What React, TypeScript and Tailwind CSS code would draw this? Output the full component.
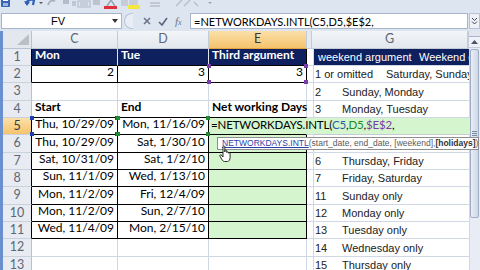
import React from 'react';

type CellProps = {
  w: string;
  bg?: string;
  rb?: string;
  bb?: string;
  align?: string;
  className?: string;
  children?: React.ReactNode;
};

function Cell({ w, bg = 'bg-white', rb = 'border-r-[#d0d7e5]', bb = 'border-b-[#d0d7e5]', align = 'justify-end', className = '', children }: CellProps) {
  return (
    <div className={`${w} shrink-0 border-r border-b ${rb} ${bb} ${bg} flex items-end ${align} px-[3px] pb-[1px] whitespace-nowrap relative ${className}`}>
      {children}
    </div>
  );
}

function Handles({ color }: { color: string }) {
  return (
    <>
      <span className={`absolute -left-[2px] -top-[2px] w-[4px] h-[4px] ${color} z-10`} />
      <span className={`absolute -right-[2px] -top-[2px] w-[4px] h-[4px] ${color} z-10`} />
      <span className={`absolute -left-[2px] -bottom-[2px] w-[4px] h-[4px] ${color} z-10`} />
      <span className={`absolute -right-[2px] -bottom-[2px] w-[4px] h-[4px] ${color} z-10`} />
    </>
  );
}

function RowHead({ n, sel, black }: { n: number; sel?: boolean; black?: boolean }) {
  return (
    <div
      className={`w-[29px] shrink-0 border-r border-b border-b-[#c9d1dd] ${black ? 'border-r-black' : 'border-r-[#b7c1d0]'} ${sel ? 'bg-linear-to-b from-[#fbe0a8] to-[#f5c36c] text-[#3a3a3a]' : 'bg-[#e8ecf2] text-[#5c6675]'} flex items-center justify-center text-[12.5px] leading-none`}
    >
      {n}
    </div>
  );
}

function GText({ num, text, numW = 'w-[27px]' }: { num: string; text: string; numW?: string }) {
  return (
    <div className="flex w-full font-['Liberation_Sans',Arial,sans-serif] text-[11px] leading-[13px] text-[#222]">
      <span className={`${numW} shrink-0`}>{num}</span>
      <span>{text}</span>
    </div>
  );
}

const C = 'w-[86px]';
const D = 'w-[91px]';
const E = 'w-[98px]';
const F = 'w-[5px]';
const G = 'w-[156px]';

const dataRows: { n: number; h: string; c: string; d: string; gn: string; gt: string }[] = [
  { n: 7, h: 'h-[17px]', c: 'Sat, 10/31/09', d: 'Sat, 1/2/10', gn: '6', gt: 'Thursday, Friday' },
  { n: 8, h: 'h-[17px]', c: 'Sun, 11/1/09', d: 'Wed, 1/13/10', gn: '7', gt: 'Friday, Saturday' },
  { n: 9, h: 'h-[18px]', c: 'Mon, 11/2/09', d: 'Fri, 12/4/09', gn: '11', gt: 'Sunday only' },
  { n: 10, h: 'h-[17px]', c: 'Mon, 11/2/09', d: 'Sun, 2/7/10', gn: '12', gt: 'Monday only' },
  { n: 11, h: 'h-[17px]', c: 'Wed, 11/4/09', d: 'Mon, 2/15/10', gn: '13', gt: 'Tuesday only' },
];

export default function App() {
  return (
    <div className="relative w-[480px] h-[270px] overflow-hidden bg-[#dde5f0] flex flex-col font-['Lato','Carlito',sans-serif] text-[12px] text-black select-none">
      {/* Quick access toolbar (cut off) */}
      <div className="h-[11px] shrink-0 relative">
        <svg width="480" height="11" className="block">
          <rect x="1" y="-3" width="9" height="10" rx="1" fill="#3a64b4" />
          <rect x="3" y="-3" width="5" height="4" fill="#ffffff" />
          <rect x="3" y="3" width="5" height="3" fill="#9fb7e0" />
          <path d="M26 4 Q28 -2 34 0 L33 5" stroke="#2d5fb8" strokeWidth="2.2" fill="none" />
          <path d="M24 1 L27 6 L30 2 Z" fill="#2d5fb8" />
          <path d="M39 2 L43 2 L41 4 Z" fill="#555" />
          <path d="M48 5 Q50 -1 55 1" stroke="#a9b2c0" strokeWidth="2" fill="none" />
          <rect x="63" y="0" width="6" height="4" fill="#b4bccb" />
          <rect x="72" y="1" width="4" height="5" fill="#c0c6d2" />
          <rect x="78" y="1" width="12" height="6" fill="none" stroke="#b0b8c6" />
          <path d="M80 3 H88 M80 5 H88" stroke="#b0b8c6" />
          <rect x="93" y="0" width="7" height="5" fill="#bcc3cf" />
          <path d="M107 6 L111 0 L115 6" stroke="#9aa3b2" strokeWidth="1.5" fill="none" />
          <rect x="104" y="6" width="13" height="3" fill="#e0303a" />
          <rect x="121" y="0" width="7" height="6" fill="#c7cdd8" />
          <rect x="129" y="0" width="9" height="5" fill="#c9cfda" />
          <rect x="128" y="5" width="12" height="4" fill="#f5e642" />
          <path d="M150 3 H160 M150 6 H160" stroke="#b9c0cc" strokeWidth="1.5" />
          <path d="M176 6 L182 0 M184 6 L190 0" stroke="#b9c0cc" strokeWidth="1.5" />
          <path d="M194 2 L198 6" stroke="#b9c0cc" strokeWidth="1.5" />
          <path d="M208 2 L212 2 L210 4 Z" fill="#9aa3b2" />
        </svg>
      </div>

      {/* Formula bar */}
      <div className="h-[20px] shrink-0 flex items-center pl-[1px]">
        <div className="w-[121px] h-[16px] bg-white border border-[#a6b5cb] flex items-center pl-[49px] pr-[3px] font-['Liberation_Sans',Arial,sans-serif] text-[11px]">
          <span className="flex-1">FV</span>
          <svg width="6" height="4"><path d="M0 0 L6 0 L3 4 Z" fill="#333" /></svg>
        </div>
        <div className="w-[9px] h-[16px] ml-[2px] rounded-l-full border border-r-0 border-[#b8c4d6] bg-[#e9eef6]" />
        <div className="flex items-center gap-[7px] ml-[10px] w-[47px]">
          <svg width="8" height="8"><path d="M1 1 L7 7 M7 1 L1 7" stroke="#6b7688" strokeWidth="1.6" /></svg>
          <svg width="10" height="9"><path d="M1 5 L4 8 L9 1" stroke="#586579" strokeWidth="1.6" fill="none" /></svg>
          <span className="font-['Liberation_Serif',serif] italic text-[11px] text-[#6b7688] leading-none">f<span className="text-[8px]">x</span></span>
        </div>
        <div className="w-[278px] h-[16px] bg-white border border-[#a6b5cb] flex items-center pl-[3px] text-[11px] leading-none">
          =NETWORKDAYS.INTL(C5,D5,$E$2,
        </div>
        <div className="w-[11px] h-[16px] ml-[1px] bg-[#eef2f8] border border-[#b6c2d4] flex items-center justify-center">
          <svg width="7" height="8"><path d="M1 1 L3.5 3.5 L6 1 M1 4.5 L3.5 7 L6 4.5" stroke="#444" strokeWidth="1" fill="none" /></svg>
        </div>
      </div>

      {/* Sheet */}
      <div className="flex flex-1 border-l-[3px] border-l-[#6a8fcf]">
        <div className="flex flex-col w-[465px] bg-white">
          {/* column headers */}
          <div className="flex h-[18px] shrink-0 text-[12.5px] leading-none">
            <div className="w-[29px] shrink-0 bg-[#e3e8ef] border-r border-b border-[#b7c1d0] relative">
              <svg width="28" height="17" className="absolute left-0 top-0">
                <path d="M14 14 L26 14 L26 3 Z" fill="#b9c0ca" />
              </svg>
            </div>
            <div className={`${C} shrink-0 bg-linear-to-b from-[#f3f5f8] to-[#e2e7ee] border-r border-b border-[#c3cbd7] flex items-center justify-center text-[#5c6675]`}>C</div>
            <div className={`${D} shrink-0 bg-linear-to-b from-[#f3f5f8] to-[#e2e7ee] border-r border-b border-[#c3cbd7] flex items-center justify-center text-[#5c6675]`}>D</div>
            <div className={`${E} shrink-0 bg-linear-to-b from-[#fbe0a8] to-[#f5c36c] border-r border-b border-r-[#c3cbd7] border-b-[#e3a33e] flex items-center justify-center text-[#3a3a3a]`}>E</div>
            <div className={`${F} shrink-0 bg-[#e6eaf0] border-r border-b border-[#c3cbd7]`} />
            <div className={`${G} shrink-0 bg-linear-to-b from-[#f3f5f8] to-[#e2e7ee] border-r border-b border-[#c3cbd7] flex items-center justify-center text-[#5c6675]`}>G</div>
          </div>

          {/* Row 1 */}
          <div className="flex h-[17px] shrink-0">
            <RowHead n={1} black />
            <Cell w={C} bg="bg-[#0f205e]" rb="border-r-[#dfe3ec]" bb="border-b-black" align="justify-start" className="font-bold text-white">Mon</Cell>
            <Cell w={D} bg="bg-[#0f205e]" rb="border-r-[#dfe3ec]" bb="border-b-black" align="justify-start" className="font-bold text-white">Tue</Cell>
            <Cell w={E} bg="bg-[#0f205e]" rb="border-r-black" bb="border-b-black" align="justify-start" className="font-bold text-white">Third argument</Cell>
            <Cell w={F} />
            <Cell w={G} bg="bg-[#0f205e]" align="justify-start" className="overflow-hidden px-[0px]">
              <div className="flex w-full font-['Liberation_Sans',Arial,sans-serif] text-[11px] leading-[13px] text-white pl-[1px]">
                <span className="w-[101px] shrink-0">weekend argument</span>
                <span>Weekend days</span>
              </div>
            </Cell>
          </div>

          {/* Row 2 */}
          <div className="flex h-[17px] shrink-0">
            <RowHead n={2} black />
            <Cell w={C} rb="border-r-black" bb="border-b-black">2</Cell>
            <Cell w={D} rb="border-r-black" bb="border-b-black">3</Cell>
            <Cell w={E} rb="border-r-black" bb="border-b-black">
              3
              <Handles color="bg-[#7a3ea8]" />
            </Cell>
            <Cell w={F} />
            <Cell w={G} align="justify-start" className="overflow-hidden px-[0px] pl-[1px]">
              <GText num="1 or omitted" text="Saturday, Sunday" numW="w-[71px]" />
            </Cell>
          </div>

          {/* Row 3 */}
          <div className="flex h-[18px] shrink-0">
            <RowHead n={3} />
            <Cell w={C} />
            <Cell w={D} />
            <Cell w={E} />
            <Cell w={F} />
            <Cell w={G} align="justify-start" className="overflow-hidden px-[0px] pl-[1px]">
              <GText num="2" text="Sunday, Monday" />
            </Cell>
          </div>

          {/* Row 4 */}
          <div className="flex h-[17px] shrink-0">
            <RowHead n={4} />
            <Cell w={C} bb="border-b-black" align="justify-start" className="font-bold">Start</Cell>
            <Cell w={D} bb="border-b-black" align="justify-start" className="font-bold">End</Cell>
            <Cell w={E} bb="border-b-black" align="justify-start" className="font-bold">Net working Days</Cell>
            <Cell w={F} />
            <Cell w={G} align="justify-start" className="overflow-hidden px-[0px] pl-[1px]">
              <GText num="3" text="Monday, Tuesday" />
            </Cell>
          </div>

          {/* Row 5 */}
          <div className="flex h-[17px] shrink-0">
            <RowHead n={5} sel black />
            <Cell w={C} rb="border-r-black" bb="border-b-black">
              Thu, 10/29/09
              <Handles color="bg-[#1d3fb0]" />
            </Cell>
            <Cell w={D} rb="border-r-black" bb="border-b-black">
              Mon, 11/16/09
              <Handles color="bg-[#1f8a2e]" />
            </Cell>
            <Cell w={E} bg="bg-[#d4f5cd]" rb="border-r-[#d4f5cd]" bb="border-b-black" align="justify-start">
              <span className="absolute left-[2px] bottom-[1px] z-20 whitespace-nowrap text-[11.5px] tracking-[-0.15px]">
                =NETWORKDAYS.INTL(<span className="text-[#1f5fa8]">C5</span>,<span className="text-[#1c8a2a]">D5</span>,<span className="text-[#7a3ea8]">$E$2</span>,
              </span>
            </Cell>
            <Cell w={F} bg="bg-[#d4f5cd]" rb="border-r-[#d4f5cd]" />
            <Cell w={G} bg="bg-[#d4f5cd]" rb="border-r-[#d4f5cd]" bb="border-b-[#c5cbd5]" />
          </div>

          {/* Row 6 */}
          <div className="flex h-[18px] shrink-0">
            <RowHead n={6} black />
            <Cell w={C} rb="border-r-black" bb="border-b-black">Thu, 10/29/09</Cell>
            <Cell w={D} rb="border-r-black" bb="border-b-black">Sat, 1/30/10</Cell>
            <Cell w={E} bg="bg-[#d4f5cd]" rb="border-r-black" bb="border-b-black" />
            <Cell w={F} />
            <Cell w={G} />
          </div>

          {dataRows.map((r) => (
            <div key={r.n} className={`flex ${r.h} shrink-0`}>
              <RowHead n={r.n} black />
              <Cell w={C} rb="border-r-black" bb="border-b-black">{r.c}</Cell>
              <Cell w={D} rb="border-r-black" bb="border-b-black">{r.d}</Cell>
              <Cell w={E} bg="bg-[#d4f5cd]" rb="border-r-black" bb="border-b-black" />
              <Cell w={F} />
              <Cell w={G} align="justify-start" className="overflow-hidden px-[0px] pl-[1px]">
                <GText num={r.gn} text={r.gt} />
              </Cell>
            </div>
          ))}

          {/* Row 12 */}
          <div className="flex h-[18px] shrink-0">
            <RowHead n={12} />
            <Cell w={C} />
            <Cell w={D} />
            <Cell w={E} />
            <Cell w={F} />
            <Cell w={G} align="justify-start" className="overflow-hidden px-[0px] pl-[1px]">
              <GText num="14" text="Wednesday only" />
            </Cell>
          </div>

          {/* Row 13 */}
          <div className="flex h-[17px] shrink-0">
            <RowHead n={13} />
            <Cell w={C} />
            <Cell w={D} />
            <Cell w={E} />
            <Cell w={F} />
            <Cell w={G} align="justify-start" className="overflow-hidden px-[0px] pl-[1px]">
              <GText num="15" text="Thursday only" />
            </Cell>
          </div>
        </div>

        {/* Vertical scrollbar */}
        <div className="w-[12px] shrink-0 bg-[#e8edf5] border-l border-[#c4cedd] flex flex-col">
          <div className="h-[6px] border-b border-[#a9b6c9] bg-[#dfe6f0]" />
          <div className="h-[11px] flex items-center justify-center bg-[#eef2f8] border-b border-[#c4cedd]">
            <svg width="7" height="4"><path d="M0 4 L3.5 0 L7 4 Z" fill="#4a5566" /></svg>
          </div>
          <div className="h-[169px] mx-[1px] mt-[1px] rounded-[2px] border border-[#9eadc4] bg-linear-to-r from-[#e9eef6] to-[#cfd8e6] flex items-center justify-center">
            <div className="flex flex-col gap-[1px]">
              <span className="block w-[5px] h-[1px] bg-[#7b8aa2]" />
              <span className="block w-[5px] h-[1px] bg-[#7b8aa2]" />
              <span className="block w-[5px] h-[1px] bg-[#7b8aa2]" />
            </div>
          </div>
        </div>
      </div>

      {/* Function tooltip */}
      <div className="absolute left-[217px] top-[137px] h-[13px] w-[262px] bg-white border border-[#8e8e8e] flex items-center pl-[4px] whitespace-nowrap font-['Liberation_Sans',Arial,sans-serif] text-[8.5px] leading-none text-[#5a5a5a] z-30">
        <span className="text-[#2a3fa8] underline">NETWORKDAYS.INTL</span>
        <span>(start_date, end_date, [weekend], </span>
        <span className="font-bold text-[#333]">[holidays]</span>
        <span>)</span>
      </div>

      {/* hand cursor */}
      <svg className="absolute left-[219px] top-[145px] z-40" width="14" height="18" viewBox="0 0 14 18">
        <path
          d="M4 1.5 C4 0.7 5.8 0.7 5.8 1.5 L5.8 7 L6 5.6 C6 4.9 7.7 4.9 7.7 5.6 L7.7 7.4 C7.7 6.7 9.4 6.7 9.4 7.4 L9.4 8.2 C9.4 7.6 11.1 7.6 11.1 8.3 L11.1 12.5 C11.1 14.5 10 16.5 8.5 16.5 L5.5 16.5 C4.3 16.5 3.5 15.5 2.6 14 L0.9 11 C0.4 10.1 1.6 9.3 2.3 10.1 L4 12 Z"
          fill="#ffffff"
          stroke="#1a1a1a"
          strokeWidth="0.9"
        />
      </svg>
    </div>
  );
}
